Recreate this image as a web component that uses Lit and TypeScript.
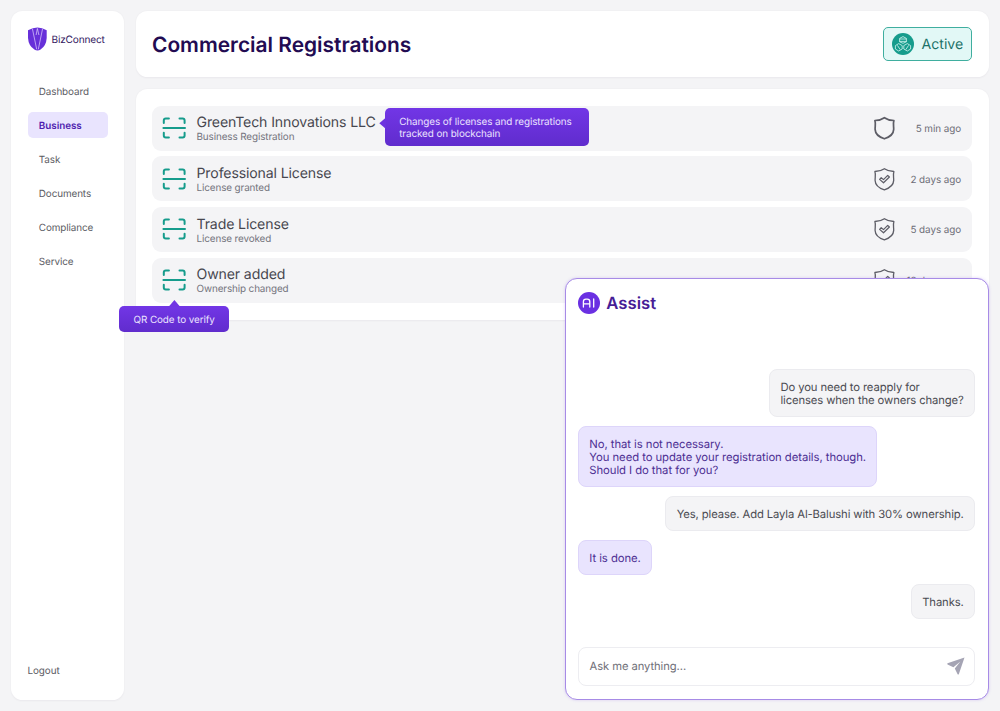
import { LitElement, html, css, svg } from "lit";
import { customElement, property } from "lit/decorators.js";
import { classMap } from "lit/directives/class-map.js";

@customElement("scan-icon")
class ScanIcon extends LitElement {
  static styles = css`
    :host { display: block; width: 24px; height: 22px; }
    svg { display: block; }
  `;
  render() {
    return html`<svg width="24" height="22" viewBox="0 0 24 22" fill="none" stroke="#169c8c" stroke-width="2" stroke-linecap="round" stroke-linejoin="round">
      <path d="M1.8 6V3.4Q1.8 1.4 3.8 1.4H6.9M17.5 1.4H20.6Q22.6 1.4 22.6 3.4V6M22.6 15.8V18.4Q22.6 20.4 20.6 20.4H17.5M6.9 20.4H3.8Q1.8 20.4 1.8 18.4V15.8M1.4 11.1H23" />
    </svg>`;
  }
}

@customElement("shield-icon")
class ShieldIcon extends LitElement {
  @property({ type: Boolean }) checked = false;
  static styles = css`
    :host { display: block; width: 22px; height: 24px; }
    svg { display: block; }
  `;
  render() {
    return html`<svg width="22" height="24" viewBox="0 0 22 24" fill="none" stroke="#5d5d66" stroke-linejoin="round">
      <path stroke-width=${this.checked ? "1.3" : "1.7"} d="M11.4 1.7C8.8 3.5 5.4 4.5 1.9 4.5C2.9 7.6 2 10.4 2.1 13.4C2.3 18.2 6.4 21.2 11.4 22.8C16.4 21.2 20.5 18.2 20.7 13.4C20.8 10.4 19.9 7.6 20.9 4.5C17.4 4.5 14 3.5 11.4 1.7Z" />
      ${this.checked ? svg`<path stroke-width="1.2" d="M6.6 12.4L8.2 10.7L10.5 12.6L14.7 8.4L16.4 10L10.5 15.8Z" />` : ""}
    </svg>`;
  }
}

interface Entry { title: string; detail: string; time: string; checked: boolean; tip?: string[]; qr?: string; }

const nav = ["Dashboard", "Business", "Task", "Documents", "Compliance", "Service"];

const entries: Entry[] = [
  { title: "GreenTech Innovations LLC", detail: "Business Registration", time: "5 min ago", checked: false, tip: ["Changes of licenses and registrations", "tracked on blockchain"] },
  { title: "Professional License", detail: "License granted", time: "2 days ago", checked: true },
  { title: "Trade License", detail: "License revoked", time: "5 days ago", checked: true },
  { title: "Owner added", detail: "Ownership changed", time: "12 days ago", checked: true, qr: "QR Code to verify" },
];

const messages = [
  { mine: true, lines: ["Do you need to reapply for", "licenses when the owners change?"] },
  { mine: false, lines: ["No, that is not necessary.", "You need to update your registration details, though.", "Should I do that for you?"] },
  { mine: true, lines: ["Yes, please. Add Layla Al-Balushi with 30% ownership."] },
  { mine: false, lines: ["It is done."] },
  { mine: true, lines: ["Thanks."] },
];

@customElement("assist-panel")
class AssistPanel extends LitElement {
  static styles = css`
    :host {
      display: flex; flex-direction: column; box-sizing: border-box;
      background: #fff; border: 1px solid #a78be6; border-radius: 12px;
      box-shadow: 0 0 3px rgba(124, 77, 230, 0.25);
      padding: 13px 13px 13px 12.5px;
    }
    .head { display: flex; align-items: center; gap: 6.3px; height: 22px; }
    .head h2 { margin: 2px 0 0; font-size: 16.7px; font-weight: 600; line-height: 22px; color: #471d96; }
    .messages { flex: 1; display: flex; flex-direction: column; justify-content: flex-end; gap: 8.7px; padding-bottom: 27.7px; }
    .bubble {
      align-self: flex-start; box-sizing: border-box; border: 1px solid #ddd5fa; border-radius: 8px;
      background: #e9e4fe; color: #4d2f93; padding: 10.8px 10.3px 9.1px;
      font-size: 11.3px; letter-spacing: -0.06px; line-height: 13.2px; white-space: nowrap;
    }
    .bubble.mine { align-self: flex-end; background: #f4f4f6; border-color: #ebebef; color: #4b4b52; font-size: 11.28px; letter-spacing: -0.11px; }
    .prompt {
      display: flex; align-items: center; justify-content: space-between; box-sizing: border-box;
      height: 39px; border: 1px solid #ededf1; border-radius: 8px; padding: 0 9.5px 0 10.5px;
      font-size: 11.2px; letter-spacing: -0.06px; color: #71717a;
    }
    svg { display: block; }
  `;
  render() {
    return html`
      <div class="head">
        <svg width="22" height="22" viewBox="0 0 22 22">
          <circle cx="11" cy="11" r="11" fill="#6a30e2" />
          <path d="M5.4 15V9.7Q5.4 7.2 7.9 7.2H9.3Q11.8 7.2 11.8 9.7V15M5.4 11.8H11.8M15.7 7V15" fill="none" stroke="#fff" stroke-width="1.3" stroke-linecap="round" />
        </svg>
        <h2>Assist</h2>
      </div>
      <div class="messages">
        ${messages.map((m) => html`<div class=${classMap({ bubble: true, mine: m.mine })}>${m.lines.map((l) => html`<div>${l}</div>`)}</div>`)}
      </div>
      <div class="prompt">
        <span>Ask me anything...</span>
        <svg width="18" height="18" viewBox="0 0 18 18">
          <path d="M17.5 0.5L0.5 6.2Q0 6.6 0.5 7.4L6.4 10.2L13.4 4.4L7.8 11.4L10.6 17.2Q11.2 17.9 11.8 17.2Z" fill="#a5a4b4" />
        </svg>
      </div>
    `;
  }
}

@customElement("app-root")
class AppRoot extends LitElement {
  static styles = css`
    :host {
      display: block; position: relative; box-sizing: border-box; width: 1000px; height: 711px; overflow: hidden;
      background: #f4f4f6; font-family: Inter, "Liberation Sans", sans-serif; color: #5b5b63;
      text-rendering: geometricPrecision;
    }
    svg { display: block; flex: none; }
    .layout { display: flex; gap: 12px; height: 100%; box-sizing: border-box; padding: 11px 11.5px 11px 11px; }
    .card { background: #fff; border-radius: 11.5px; box-shadow: 0 0.5px 2px rgba(30, 20, 60, 0.05); box-sizing: border-box; }
    .side { display: flex; flex-direction: column; width: 113px; flex: none; padding: 15.5px 16.5px 20px; }
    .brand { display: flex; align-items: center; gap: 5px; height: 24px; margin-bottom: 27.5px; font-size: 10.1px; letter-spacing: -0.18px; font-weight: 400; color: #34205f; white-space: nowrap; }
    .brand span { padding-top: 2px; }
    .nav { display: flex; flex-direction: column; gap: 8px; }
    .nav-item { height: 26px; line-height: 28.3px; padding-left: 11.3px; border-radius: 5px; width: 80px; box-sizing: border-box; font-size: 9.9px; letter-spacing: -0.1px; white-space: nowrap; }
    .nav-item.on { background: #e9e4fe; color: #501fb0; font-weight: 600; letter-spacing: -0.05px; }
    .logout { margin-top: auto; font-size: 9.9px; letter-spacing: -0.08px; line-height: 18px; }
    .main { flex: 1; display: flex; flex-direction: column; gap: 12px; min-width: 0; }
    .top { display: flex; align-items: center; justify-content: space-between; height: 66px; padding: 0 16.5px 0 16px; }
    h1 { margin: 0; padding-top: 3px; font-size: 20.9px; font-weight: 600; line-height: 28px; color: #220b52; white-space: nowrap; }
    .status {
      display: flex; align-items: center; gap: 8px; height: 34px; width: 89.5px; box-sizing: border-box; margin-top: 0.6px;
      border: 1px solid #3fae9f; border-radius: 5px; background: #e2f8f6; padding-left: 8px; color: #1c7268; font-size: 14.1px;
    }
    .list { display: flex; flex-direction: column; gap: 5.7px; height: 230.5px; padding: 16.5px 16.5px 0 16px; }
    .row { position: relative; display: flex; align-items: center; height: 45px; flex: none; box-sizing: border-box; background: #f4f4f6; border-radius: 9px; padding: 0 11px 0 10px; }
    .names { margin: 1.9px 0 0 10.5px; flex: 1; white-space: nowrap; }
    .title { font-size: 14.1px; letter-spacing: -0.13px; line-height: 17px; color: #47474f; }
    .detail { font-size: 9.9px; letter-spacing: -0.11px; line-height: 12.6px; color: #73737c; }
    .time { width: 66px; padding-top: 2px; text-align: right; font-size: 9.9px; letter-spacing: -0.08px; color: #6d6d76; white-space: nowrap; }
    .tip { position: absolute; z-index: 2; background: linear-gradient(#7236e6, #602ccd); color: #ece4ff; border-radius: 5px; font-size: 9.9px; letter-spacing: -0.09px; line-height: 12px; box-sizing: border-box; white-space: nowrap; }
    .tip::before { content: ""; position: absolute; background: #6d34df; }
    .tip-right { left: 233.3px; top: 2.8px; width: 203.5px; height: 37.5px; padding: 7.7px 13.9px 0; }
    .tip-right::before { left: -6px; top: 9px; width: 7px; height: 12px; clip-path: polygon(0 50%, 100% 0, 100% 100%); }
    .tip-below { left: -32.6px; top: 48.4px; width: 109.5px; height: 26px; line-height: 28.4px; text-align: center; }
    .tip-below::before { left: 49px; top: -6px; width: 12px; height: 7px; background: #7034e3; clip-path: polygon(50% 0, 100% 100%, 0 100%); }
    assist-panel { position: absolute; left: 564.5px; top: 277.5px; width: 424.5px; height: 422px; z-index: 3; }
  `;
  render() {
    return html`
      <div class="layout">
        <aside class="side card">
          <div class="brand">
            <svg width="19" height="24" viewBox="0 0 19 24">
              <path d="M0 3.2Q9.5 -2.2 18.7 3.2V11Q18.2 18.8 12.6 22.6Q9.5 24.4 6.4 22.6Q0.5 18.8 0 11Z" fill="#6730d9" />
              <path d="M4.4 1.7L8.7 22.3M14.6 1.7L10.3 22.3M8.1 8L9.4 1.5L10.9 8" fill="none" stroke="#d8c7fb" stroke-width="0.75" />
            </svg>
            <span>BizConnect</span>
          </div>
          <nav class="nav">
            ${nav.map((n) => html`<div class=${classMap({ "nav-item": true, on: n === "Business" })}>${n}</div>`)}
          </nav>
          <div class="logout">Logout</div>
        </aside>
        <main class="main">
          <header class="top card">
            <h1>Commercial Registrations</h1>
            <div class="status">
              <svg width="22" height="22" viewBox="0 0 22 22">
                <circle cx="11" cy="11" r="11" fill="#169c8c" />
                <g fill="none" stroke="#d6f6f1" stroke-width="0.8" stroke-linejoin="round">
                  <path d="M7.6 8.8V5.4L11 3.6L14.4 5.4V8.8L11 10.3ZM7.6 6H14.4M7.6 8.4H14.4" />
                  <path d="M3.4 12.6L6.7 10.6L10.2 12.6V16L6.7 18L3.4 16ZM5.4 12.4L8.2 16.6" />
                  <path d="M11.8 12.6L15.3 10.6L18.6 12.6V16L15.3 18L11.8 16ZM16.6 12.4L13.8 16.6" />
                </g>
              </svg>
              <span>Active</span>
            </div>
          </header>
          <section class="list card">
            ${entries.map((e) => html`
              <div class="row">
                <scan-icon></scan-icon>
                <div class="names">
                  <div class="title">${e.title}</div>
                  <div class="detail">${e.detail}</div>
                </div>
                <shield-icon ?checked=${e.checked}></shield-icon>
                <div class="time">${e.time}</div>
                ${e.tip ? html`<div class="tip tip-right">${e.tip.map((l) => html`<div>${l}</div>`)}</div>` : ""}
                ${e.qr ? html`<div class="tip tip-below">${e.qr}</div>` : ""}
              </div>`)}
          </section>
        </main>
      </div>
      <assist-panel></assist-panel>
    `;
  }
}
